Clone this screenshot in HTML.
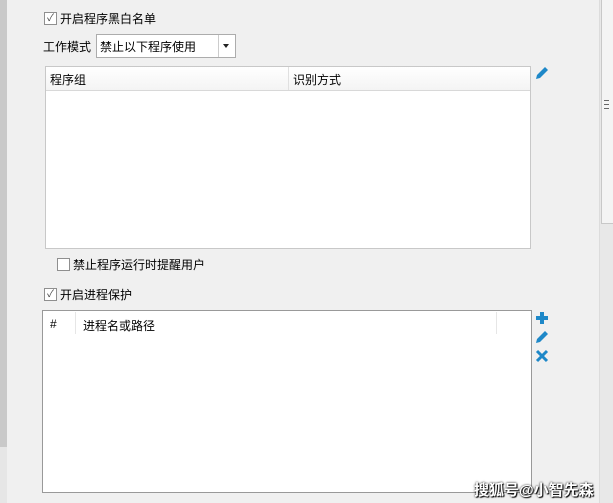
<html><head><style>
body{margin:0;width:613px;height:503px;background:#f0f0f0;position:relative;overflow:hidden;font-family:"Liberation Sans","Noto Sans CJK SC",sans-serif;font-size:12px;color:#000}
.a{position:absolute}
.cb{position:absolute;width:11px;height:11px;border:1px solid #8f8f8f;background:#fff;font-size:10px;line-height:11px;text-align:center;color:#444}
</style></head><body>
<div class="a" style="left:0;top:0;width:7px;height:447px;background:#c9c9c9"></div>
<div class="a" style="left:0;top:447px;width:7px;height:56px;background:#e6e6e6"></div>
<div class="a" style="left:599px;top:0;width:14px;height:503px;background:#e8e8e8;border-left:1px solid #dcdcdc"></div>
<div class="a" style="left:601px;top:0;width:11px;height:223px;background:#f4f4f4;border:1px solid #c8c8c8;border-top:none"></div>
<div class="a" style="left:604px;top:100px;width:5px;height:7px;border-top:1px solid #666;border-bottom:1px solid #666"></div>
<div class="a" style="left:604px;top:104px;width:5px;height:1px;background:#666"></div>

<div class="cb" style="left:44px;top:12px">✓</div>
<div class="a" style="left:60px;top:10px">开启程序黑白名单</div>
<div class="a" style="left:43px;top:38px">工作模式</div>
<div class="a" style="left:96px;top:34px;width:138px;height:22px;background:#fff;border:1px solid #acacac"></div>
<div class="a" style="left:100px;top:38px">禁止以下程序使用</div>
<div class="a" style="left:218px;top:35px;width:1px;height:22px;background:#ccc"></div>
<div class="a" style="left:223px;top:44px;border:3px solid transparent;border-top:4px solid #222"></div>

<div class="a" style="left:45px;top:66px;width:484px;height:181px;background:#fff;border:1px solid #c8c8c8"></div>
<div class="a" style="left:46px;top:67px;width:484px;height:23px;background:linear-gradient(#fff,#f4f4f4);border-bottom:1px solid #d8d8d8"></div>
<div class="a" style="left:288px;top:67px;width:1px;height:23px;background:#e0e0e0"></div>
<div class="a" style="left:50px;top:71px">程序组</div>
<div class="a" style="left:293px;top:71px">识别方式</div>

<svg class="a" style="left:534px;top:65px" width="16" height="16" viewBox="0 0 16 16"><path d="M2 14 L3 10 L11 2 L14 5 L6 13 Z" fill="#1e88c8"/></svg>

<div class="cb" style="left:57px;top:258px"></div>
<div class="a" style="left:73px;top:256px">禁止程序运行时提醒用户</div>
<div class="cb" style="left:44px;top:288px">✓</div>
<div class="a" style="left:60px;top:286px">开启进程保护</div>

<div class="a" style="left:42px;top:310px;width:488px;height:181px;background:#fff;border:1px solid #999"></div>
<div class="a" style="left:75px;top:312px;width:1px;height:22px;background:#e6e6e6"></div>
<div class="a" style="left:496px;top:312px;width:1px;height:22px;background:#e6e6e6"></div>
<div class="a" style="left:50px;top:317px">#</div>
<div class="a" style="left:83px;top:317px">进程名或路径</div>

<svg class="a" style="left:534px;top:310px" width="16" height="16" viewBox="0 0 16 16"><path d="M6 2h4v4h4v4h-4v4H6v-4H2V6h4z" fill="#1e88c8"/></svg>
<svg class="a" style="left:534px;top:329px" width="16" height="16" viewBox="0 0 16 16"><path d="M2 14 L3 10 L11 2 L14 5 L6 13 Z" fill="#1e88c8"/></svg>
<svg class="a" style="left:535px;top:349px" width="14" height="14" viewBox="0 0 14 14"><path d="M2 2 L12 12 M12 2 L2 12" stroke="#1e88c8" stroke-width="3"/></svg>

<div class="a" style="left:474px;top:479px;font-size:15px;color:#fff;font-weight:bold;text-shadow:0 0 2px #000,1px 1px 1px #000">搜狐号@小智先森</div>
</body></html>
